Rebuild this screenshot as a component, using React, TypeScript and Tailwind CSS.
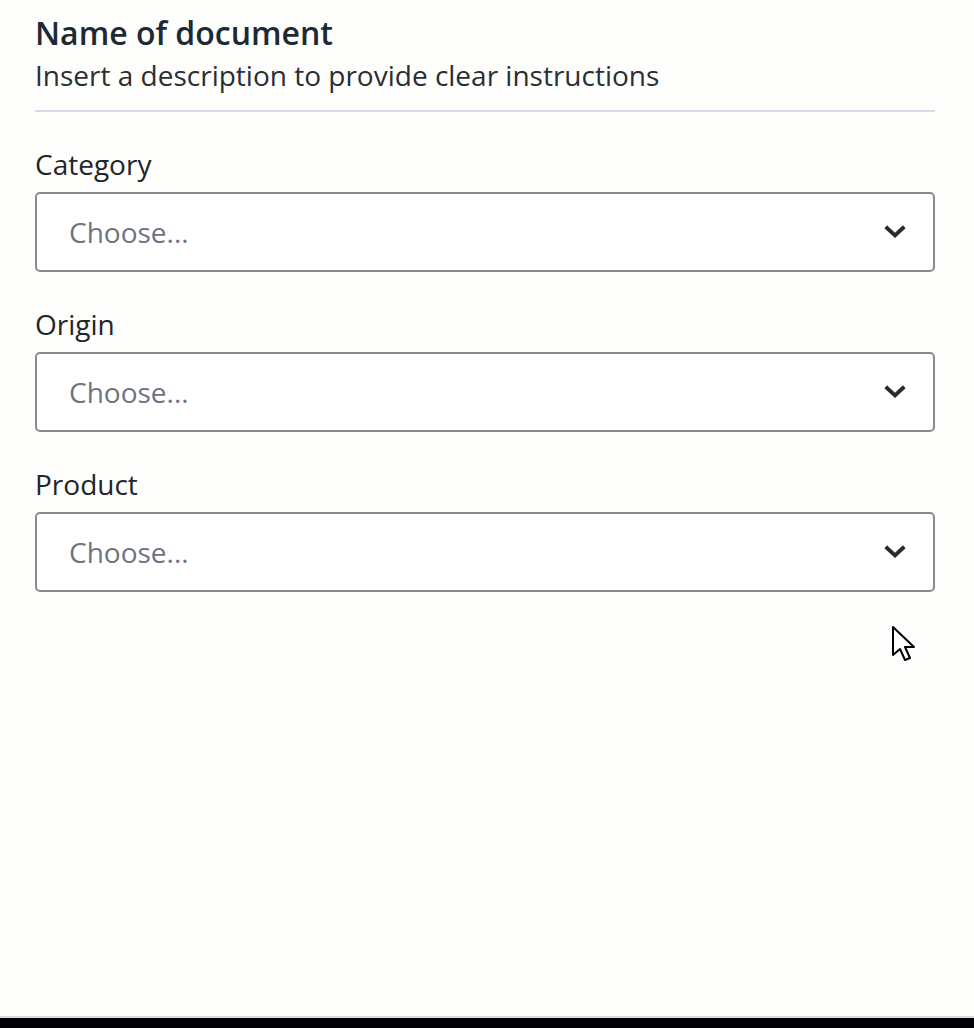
import React from "react";

function Chevron() {
  return (
    <svg width="22" height="14" viewBox="0 0 22 14" fill="none">
      <path d="M3.2 3.2 L11 10.4 L18.8 3.2" stroke="#2a2a2a" strokeWidth="4" strokeLinecap="square" />
    </svg>
  );
}

function Field({ label }: { label: string }) {
  return (
    <div className="flex flex-col">
      <label className="text-[28px] leading-[36px] text-[#222529]">{label}</label>
      <div className="mt-[10px] flex h-[80px] items-center justify-between rounded-[5px] border-2 border-[#8a8a8a] bg-white pl-[32px] pr-[27px]">
        <span className="text-[28px] leading-[36px] text-[#6e7480]">Choose...</span>
        <Chevron />
      </div>
    </div>
  );
}

export default function App() {
  return (
    <div
      className="relative flex min-h-screen flex-col bg-[#fefefd]"
      style={{ fontFamily: '"Open Sans", "Noto Sans", sans-serif' }}
    >
      <div className="flex-1 px-[35px] pt-[13px]">
        <div className="w-[900px]">
          <h1 className="text-[32px] font-semibold leading-[40px] text-[#1f2933]">Name of document</h1>
          <p className="mt-[4px] text-[28px] leading-[36px] text-[#2b2e33]">Insert a description to provide clear instructions</p>
          <div className="mt-[17px] h-[2px] bg-[#d5dae8]" />
          <div className="mt-[34px] flex flex-col gap-[34px]">
            <Field label="Category" />
            <Field label="Origin" />
            <Field label="Product" />
          </div>
        </div>
      </div>
      <div className="h-[2px] bg-[#d6d9e8]" />
      <div className="h-[10px] bg-[#030306]" />
      <svg className="absolute left-[891px] top-[625px]" width="26" height="38" viewBox="0 0 26 38">
        <path d="M2 2 L2 30 L9 24 L14 35 L19 33 L14 22 L23 22 Z" fill="#fff" stroke="#000" strokeWidth="2" strokeLinejoin="round" />
      </svg>
    </div>
  );
}
